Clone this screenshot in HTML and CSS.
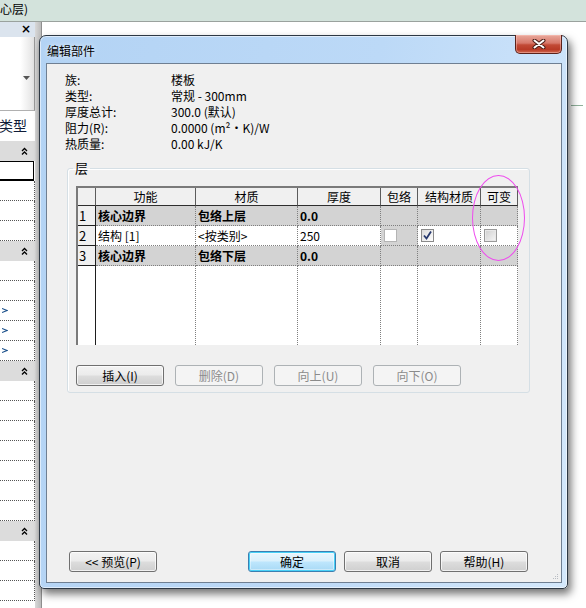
FILE: index.html
```html
<!DOCTYPE html>
<html lang="zh-CN">
<head>
<meta charset="utf-8">
<title>编辑部件</title>
<link rel="stylesheet" href="styles.css">
</head>
<body>
<div class="desk">
  <div class="topstrip"><span class="topstrip-text">心层)</span></div>
  <div class="work">
    <aside class="lp">
      <div class="lp-head">×</div>
      <div class="lp-props"><svg class="lp-drop" width="7" height="4" viewBox="0 0 7 4"><polygon points="0,0 7,0 3.5,4" fill="#555"/></svg></div>
      <div class="lp-type">类型</div>
      <div class="lp-sec"><svg width="7" height="8" viewBox="0 0 7 8"><path d="M1 4 L3.5 1.5 L6 4 M1 7.5 L3.5 5 L6 7.5" fill="none" stroke="#000" stroke-width="1.3"/></svg></div>
      <div class="lp-input"></div>
      <div class="lp-row"></div>
      <div class="lp-row"></div>
      <div class="lp-row"></div>
      <div class="lp-sec"><svg width="7" height="8" viewBox="0 0 7 8"><path d="M1 4 L3.5 1.5 L6 4 M1 7.5 L3.5 5 L6 7.5" fill="none" stroke="#000" stroke-width="1.3"/></svg></div>
      <div class="lp-row"></div>
      <div class="lp-row"></div>
      <div class="lp-row"><svg class="lp-arrow" width="6" height="5" viewBox="0 0 6 5"><path d="M0 0.5 L5 2.5 L0 4.5" fill="none" stroke="#1a4f8a" stroke-width="1.1"/></svg></div>
      <div class="lp-row"><svg class="lp-arrow" width="6" height="5" viewBox="0 0 6 5"><path d="M0 0.5 L5 2.5 L0 4.5" fill="none" stroke="#1a4f8a" stroke-width="1.1"/></svg></div>
      <div class="lp-row"><svg class="lp-arrow" width="6" height="5" viewBox="0 0 6 5"><path d="M0 0.5 L5 2.5 L0 4.5" fill="none" stroke="#1a4f8a" stroke-width="1.1"/></svg></div>
      <div class="lp-sec"><svg width="7" height="8" viewBox="0 0 7 8"><path d="M1 4 L3.5 1.5 L6 4 M1 7.5 L3.5 5 L6 7.5" fill="none" stroke="#000" stroke-width="1.3"/></svg></div>
      <div class="lp-row"></div>
      <div class="lp-row"></div>
      <div class="lp-row"></div>
      <div class="lp-row"></div>
      <div class="lp-row"></div>
      <div class="lp-row"></div>
      <div class="lp-row"></div>
      <div class="lp-sec"><svg width="7" height="8" viewBox="0 0 7 8"><path d="M1 4 L3.5 1.5 L6 4 M1 7.5 L3.5 5 L6 7.5" fill="none" stroke="#000" stroke-width="1.3"/></svg></div>
      <div class="lp-row"></div>
      <div class="lp-row"></div>
      <div class="lp-row"></div>
    </aside>
    <div class="gutter"></div>
    <div class="canvas"><div class="canvas-mark"></div></div>
  </div>

  <div class="dialog">
    <div class="titlebar"><span class="title">编辑部件</span></div>
    <button class="close" type="button" aria-label="关闭"><svg width="14" height="10" viewBox="0 0 14 10"><path d="M2.5 1.5 L11.5 8.5 M11.5 1.5 L2.5 8.5" stroke="#4a1e18" stroke-width="4" stroke-linecap="round"/><path d="M2.5 1.5 L11.5 8.5 M11.5 1.5 L2.5 8.5" stroke="#fff" stroke-width="2" stroke-linecap="round"/></svg></button>
    <div class="client">
      <div class="info">
        <span>族:</span><span>楼板</span>
        <span>类型:</span><span>常规 - 300mm</span>
        <span>厚度总计:</span><span>300.0 (默认)</span>
        <span>阻力(R):</span><span>0.0000 (m²·K)/W</span>
        <span>热质量:</span><span>0.00 kJ/K</span>
      </div>
      <fieldset class="group">
        <legend>层</legend>
        <div class="grid">
          <div class="g-row g-head">
            <div class="c"></div>
            <div class="c ctr">功能</div>
            <div class="c ctr">材质</div>
            <div class="c ctr">厚度</div>
            <div class="c ctr">包络</div>
            <div class="c ctr">结构材质</div>
            <div class="c ctr">可变</div>
          </div>
          <div class="g-row g-core">
            <div class="c rh">1</div>
            <div class="c">核心边界</div>
            <div class="c">包络上层</div>
            <div class="c">0.0</div>
            <div class="c"></div>
            <div class="c"></div>
            <div class="c"></div>
          </div>
          <div class="g-row g-layer">
            <div class="c rh">2</div>
            <div class="c">结构 [1]</div>
            <div class="c">&lt;按类别&gt;</div>
            <div class="c">250</div>
            <div class="c shade"><span class="cb cb-plain"></span></div>
            <div class="c"><span class="cb cb-on"><svg width="11" height="11" viewBox="0 0 11 11"><path d="M2 5.5 L4.5 8.5 L9 1.5" fill="none" stroke="#26386e" stroke-width="1.8"/></svg></span></div>
            <div class="c"><span class="cb cb-off"></span></div>
          </div>
          <div class="g-row g-core">
            <div class="c rh">3</div>
            <div class="c">核心边界</div>
            <div class="c">包络下层</div>
            <div class="c">0.0</div>
            <div class="c"></div>
            <div class="c"></div>
            <div class="c"></div>
          </div>
          <div class="g-row g-fill">
            <div class="c rh"></div>
            <div class="c"></div>
            <div class="c"></div>
            <div class="c"></div>
            <div class="c"></div>
            <div class="c"></div>
            <div class="c"></div>
          </div>
        </div>
        <div class="grp-btns">
          <button class="btn" type="button">插入(I)</button>
          <button class="btn" type="button" disabled>删除(D)</button>
          <button class="btn" type="button" disabled>向上(U)</button>
          <button class="btn" type="button" disabled>向下(O)</button>
        </div>
      </fieldset>
      <div class="footer">
        <button class="btn" type="button">&lt;&lt; 预览(P)</button>
        <div class="footer-right">
          <button class="btn btn-default" type="button">确定</button>
          <button class="btn" type="button">取消</button>
          <button class="btn" type="button">帮助(H)</button>
        </div>
      </div>
      <svg class="grip" width="7" height="7" viewBox="0 0 7 7"><g fill="#b8bcc2"><rect x="5" y="1" width="1" height="1"/><rect x="3" y="3" width="1" height="1"/><rect x="5" y="3" width="1" height="1"/><rect x="1" y="5" width="1" height="1"/><rect x="3" y="5" width="1" height="1"/><rect x="5" y="5" width="1" height="1"/></g></svg>
    </div>
    <div class="mark"></div>
  </div>
</div>
</body>
</html>
```
FILE: styles.css
```css
html, body {
  margin: 0;
  padding: 0;
}
body {
  width: 586px;
  height: 608px;
  overflow: hidden;
  background: #ffffff;
  font-family: "Noto Sans CJK SC", "Liberation Sans", sans-serif;
  font-size: 12px;
  color: #000;
}
.desk {
  position: relative;
  width: 586px;
  height: 608px;
  display: flex;
  flex-direction: column;
}
.topstrip {
  height: 21px;
  background: #d3e3dc;
  border-bottom: 1px solid #9aa29e;
  overflow: hidden;
  white-space: nowrap;
  line-height: 18px;
  font-size: 12px;
}
.topstrip-text {
  display: inline-block;
  margin-left: 0;
}
.work {
  flex: 1;
  display: flex;
  min-height: 0;
}
.lp {
  width: 35px;
  display: flex;
  flex-direction: column;
  overflow: hidden;
  background: #fff;
}
.lp-head {
  height: 15px;
  flex: none;
  background: #dbe4ee;
  text-align: right;
  padding-right: 4px;
  font-family: "DejaVu Sans", sans-serif;
  font-weight: bold;
  font-size: 12px;
  line-height: 15px;
}
.lp-props {
  height: 74px;
  flex: none;
  background: linear-gradient(to right, #ffffff 60%, #e2e2e2);
  border-bottom: 1px solid #b0b0b0;
  border-right: 1px solid #9a9a9a;
  box-sizing: border-box;
  display: flex;
  justify-content: flex-end;
  align-items: flex-start;
  padding: 39px 4px 0 0;
}
.lp-type {
  height: 30px;
  flex: none;
  box-sizing: border-box;
  padding-top: 5px;
  font-size: 14px;
  line-height: 18px;
  color: #101c38;
  white-space: nowrap;
  text-indent: -1px;
}
.lp-sec {
  height: 20px;
  flex: none;
  background: #dcdcdc;
  display: flex;
  justify-content: flex-end;
  align-items: center;
  padding-right: 7px;
}
.lp-input {
  height: 20px;
  flex: none;
  box-sizing: border-box;
  border: 1px solid #000;
  border-left: none;
  border-bottom-width: 2px;
  margin-right: 1px;
  background: #fff;
}
.lp-row {
  height: 20px;
  flex: none;
  box-sizing: border-box;
  border-bottom: 1px dotted #555;
  border-right: 1px dotted #555;
  display: flex;
  align-items: center;
  padding-left: 2px;
}
.gutter {
  width: 6px;
  background: linear-gradient(to right, #d8d8d8, #bcbcbc);
  border-right: 1px solid #8e8e8e;
}
.canvas {
  flex: 1;
  background: #fff;
  padding-top: 83px;
}
.canvas-mark {
  margin-left: 529px;
  width: 12px;
  height: 1px;
  background: #8fb09a;
}

/* dialog window */
.dialog {
  position: absolute;
  left: 39px;
  top: 35px;
  width: 529px;
  height: 554px;
  box-sizing: border-box;
  border: 1px solid #2d3844;
  border-radius: 7px 7px 5px 5px;
  background: linear-gradient(100deg, #b3d3f4 0%, #bcd9f7 55%, #d4e8fb 100%);
  box-shadow: 3px 5px 9px rgba(0, 0, 0, 0.55), inset 0 0 0 1px rgba(255, 255, 255, 0.55);
  padding: 0 5px 5px 6px;
  display: flex;
  flex-direction: column;
}
.titlebar {
  height: 27px;
  flex: none;
  display: flex;
  align-items: center;
  padding: 3px 0 0 1px;
  box-sizing: border-box;
}
.title {
  font-size: 12px;
  line-height: 14px;
  text-shadow: 0 0 5px rgba(255, 255, 255, 0.9);
}
.close {
  position: absolute;
  top: -1px;
  right: 5px;
  width: 47px;
  height: 19px;
  box-sizing: border-box;
  padding: 0;
  border: 1px solid #5a221b;
  border-top: none;
  border-radius: 0 0 5px 5px;
  background: linear-gradient(to bottom, #e9a99c 0%, #d7786a 45%, #c24a36 55%, #b83a26 80%, #d0684f 100%);
  display: flex;
  align-items: center;
  justify-content: center;
  box-shadow: inset 0 0 0 1px rgba(255, 200, 190, 0.45);
}
.close svg {
  display: block;
}
.client {
  flex: 1;
  position: relative;
  border: 1px solid #6f7f92;
  background: #f0f0f0;
  display: flex;
  flex-direction: column;
  min-height: 0;
}
.info {
  display: grid;
  grid-template-columns: 106px auto;
  padding: 8px 0 0 18px;
  line-height: 16px;
  font-size: 12px;
  white-space: nowrap;
}
.group {
  margin: 9px 0 0 20px;
  width: 463px;
  box-sizing: border-box;
  border: 1px solid #d5dfe5;
  border-radius: 3px;
  padding: 0 8px 6px 8px;
  box-shadow: inset 1px 1px 0 #ffffff;
  min-inline-size: 0;
}
.group legend {
  padding: 0 2px;
  margin-left: -3px;
  font-size: 13px;
  line-height: 14px;
}
.grid {
  margin-top: 11px;
  width: 442px;
  height: 159px;
  box-sizing: border-box;
  border-top: 2px solid #7a7a7a;
  border-left: 2px solid #7a7a7a;
  background: #fff;
  display: flex;
  flex-direction: column;
  overflow: hidden;
  font-size: 12px;
}
.g-row {
  display: grid;
  grid-template-columns: 18px 100px 102px 83px 37px 63px 37px;
  flex: none;
}
.c {
  box-sizing: border-box;
  border-right: 1px dotted #7f7f7f;
  border-bottom: 1px dotted #7f7f7f;
  padding-left: 2px;
  display: flex;
  align-items: center;
  white-space: nowrap;
  overflow: hidden;
}
.ctr {
  justify-content: center;
  padding-left: 0;
}
.g-head {
  height: 18px;
  background: #f0f0f0;
}
.g-head .c {
  border-right: 1px solid #5c5c5c;
  border-bottom: 1px solid #2e2e2e;
  line-height: 16px;
}
.g-core, .g-layer {
  height: 20px;
  line-height: 18px;
}
.g-core .c {
  background: #d3d3d3;
  font-weight: bold;
}
.g-layer .c {
  background: #fff;
}
.g-layer .c.shade {
  background: #d3d3d3;
}
.c.rh,
.g-core .c.rh,
.g-layer .c.rh {
  background: #f0f0f0;
  border-right: 1px solid #1e1e1e;
  border-bottom: 1px solid #1e1e1e;
  font-weight: normal;
  padding-left: 1px;
  font-size: 13px;
}
.g-fill {
  flex: 1;
}
.g-fill .c {
  border-bottom: none;
}
.g-fill .c.rh {
  background: #fff;
  border-bottom: none;
}
.cb {
  display: inline-flex;
  align-items: center;
  justify-content: center;
  width: 13px;
  height: 13px;
  box-sizing: border-box;
  margin-left: 1px;
}
.cb-plain {
  border: 1px solid #b4b4b4;
  background: #ffffff;
}
.cb-on {
  border: 1px solid #8a8a8a;
  background: linear-gradient(135deg, #dadada, #ffffff);
}
.cb-off {
  border: 1px solid #9a9a9a;
  background: linear-gradient(135deg, #cfcfcf, #f6f6f6);
  box-shadow: inset 0 0 0 1px #e8e8e8;
}
.grp-btns {
  display: flex;
  gap: 11px;
  margin-top: 20px;
}
.btn {
  width: 88px;
  height: 21px;
  box-sizing: border-box;
  padding: 0;
  border: 1px solid #707070;
  border-radius: 3px;
  background: linear-gradient(to bottom, #f3f3f3 0%, #ebebeb 48%, #dddddd 52%, #cfcfcf 100%);
  font-family: "Noto Sans CJK SC", "Liberation Sans", sans-serif;
  font-size: 12px;
  line-height: 17px;
  color: #000;
  box-shadow: inset 0 0 0 1px rgba(255, 255, 255, 0.7);
}
.btn:disabled {
  border-color: #adb2b5;
  background: #f4f4f4;
  color: #8b8b8b;
  box-shadow: none;
}
.btn-default {
  border-color: #3c7fb1;
  background: linear-gradient(to bottom, #eaf6fd 0%, #d9f0fc 48%, #bee6fd 52%, #a7d9f5 100%);
  box-shadow: inset 0 0 0 1px #48d1f7, inset 0 0 0 2px rgba(255, 255, 255, 0.4);
}
.footer {
  margin-top: auto;
  display: flex;
  justify-content: space-between;
  padding: 0 33px 10px 22px;
}
.footer-right {
  display: flex;
  gap: 8px;
}
.grip {
  position: absolute;
  right: 2px;
  bottom: 2px;
}
.mark {
  position: absolute;
  left: 432px;
  top: 139px;
  width: 53px;
  height: 86px;
  box-sizing: border-box;
  border: 1px solid #ee4cee;
  border-radius: 50%;
  pointer-events: none;
}
```
